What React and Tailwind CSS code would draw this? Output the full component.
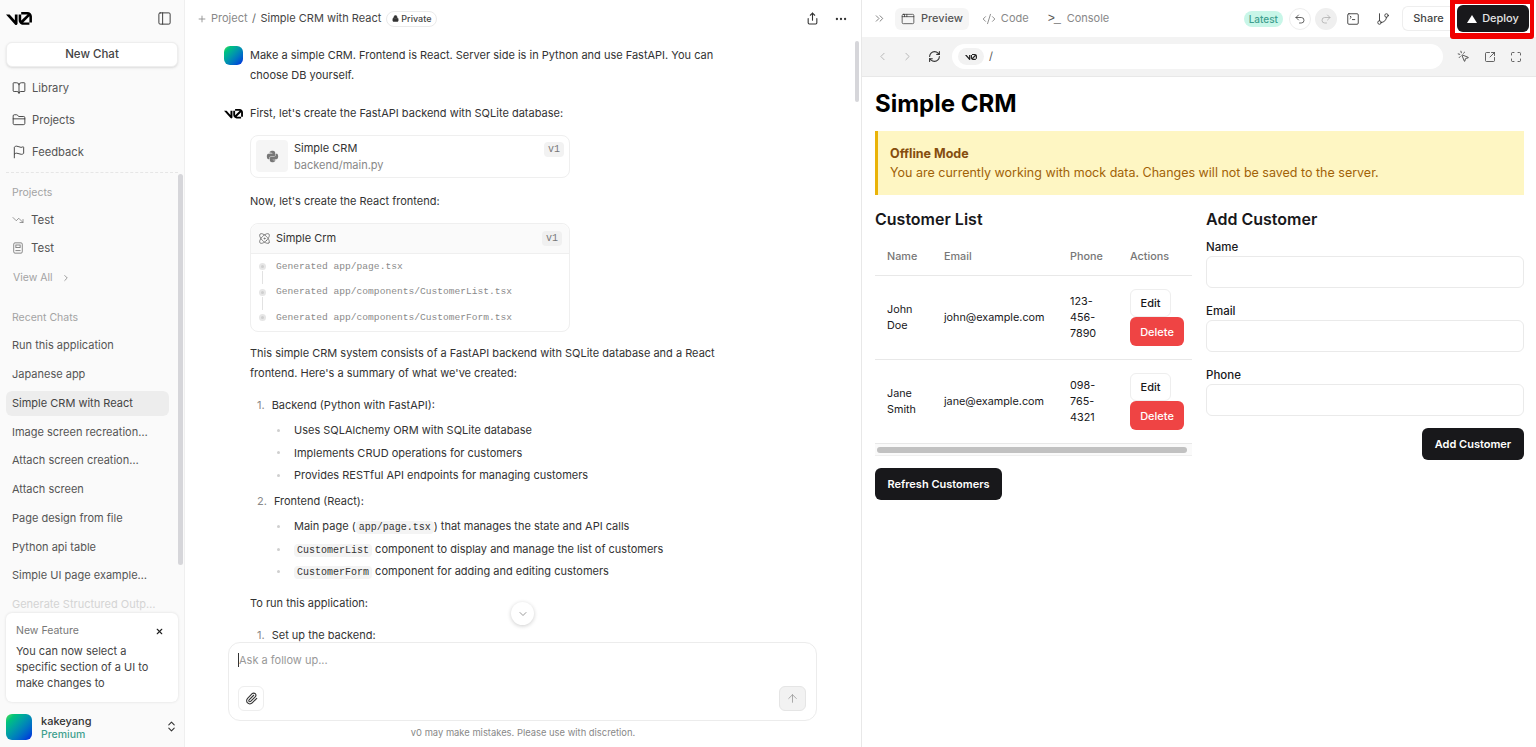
import {
  AppWindow,
  ArrowUp,
  Atom,
  BookOpen,
  ChevronDown,
  ChevronLeft,
  ChevronRight,
  ChevronsRight,
  ChevronsUpDown,
  CodeXml,
  Ellipsis,
  Flag,
  FolderClosed,
  GitBranch,
  Lock,
  Maximize,
  MousePointerClick,
  PanelLeft,
  Paperclip,
  Plus,
  RefreshCw,
  Redo2,
  Share,
  SquareArrowOutUpRight,
  SquareTerminal,
  TrendingDown,
  Undo2,
  X,
} from "lucide-react";
import { FaPython } from "react-icons/fa";

const recentChats = [
  "Run this application",
  "Japanese app",
  "Simple CRM with React",
  "Image screen recreation…",
  "Attach screen creation…",
  "Attach screen",
  "Page design from file",
  "Python api table",
  "Simple UI page example…",
];

const customers = [
  { first: "John", last: "Doe", email: "john@example.com", phone: ["123-", "456-", "7890"] },
  { first: "Jane", last: "Smith", email: "jane@example.com", phone: ["098-", "765-", "4321"] },
];

function V0Logo({ className }) {
  return (
    <svg viewBox="0 0 40 20" fill="currentColor" className={className}>
      <path d="M23.3919 0H32.9188C36.7819 0 39.9136 3.13165 39.9136 6.99475V16.0805H36.0006V6.99475C36.0006 6.90167 35.9969 6.80925 35.9898 6.71766L26.4628 16.079C26.4949 16.08 26.5272 16.0805 26.5595 16.0805H36.0006V19.7762H26.5595C22.6964 19.7762 19.4788 16.6139 19.4788 12.7508V3.68923H23.3919V12.7508C23.3919 12.9253 23.4054 13.0977 23.4316 13.2668L33.1682 3.6995C33.0861 3.6927 33.003 3.68923 32.9188 3.68923H23.3919V0Z" />
      <path d="M13.7688 19.0956L0 3.68759H5.53933L13.6231 12.7337V3.68759H17.7535V17.5746C17.7535 19.6705 15.1654 20.6584 13.7688 19.0956Z" />
    </svg>
  );
}

function NoteIcon({ className }) {
  return (
    <svg viewBox="0 0 12 14" fill="none" stroke="currentColor" strokeWidth="1" className={className}>
      <rect x="1" y="1" width="10" height="12" rx="1.5" />
      <rect x="3.5" y="3.5" width="5" height="3" />
      <path d="M3 10h6" />
    </svg>
  );
}

function Avatar({ className }) {
  return <div className={`bg-gradient-to-br from-[#3fdc4a] to-[#1200e0] ${className}`} />;
}

function Sidebar() {
  return (
    <aside className="relative flex h-full w-[185px] shrink-0 flex-col overflow-hidden border-r border-[#efefef] bg-[#fafafa]">
      <div className="flex h-[42px] shrink-0 items-center justify-between pb-[5px] pl-[6px] pr-[12px]">
        <V0Logo className="w-[26px] text-black" />
        <PanelLeft className="h-[15px] w-[15px] text-[#333]" strokeWidth={1.5} />
      </div>
      <div className="mx-[6px] flex h-[25px] shrink-0 items-center justify-center rounded-md border border-[#eeeeee] bg-white pt-[1px] text-[11.5px] font-medium text-[#444] shadow-sm">
        New Chat
      </div>
      <nav className="mt-[5px] flex shrink-0 flex-col text-[11.2px] text-[#555]">
        <div className="flex h-[32px] items-center gap-[6px] pl-[12px]">
          <BookOpen className="h-[14px] w-[14px] text-[#333]" strokeWidth={1.5} />
          Library
        </div>
        <div className="flex h-[32px] items-center gap-[6px] pl-[12px]">
          <FolderClosed className="h-[14px] w-[14px] text-[#333]" strokeWidth={1.5} />
          Projects
        </div>
        <div className="flex h-[32px] items-center gap-[6px] pl-[12px]">
          <Flag className="h-[14px] w-[14px] text-[#333]" strokeWidth={1.5} />
          Feedback
        </div>
      </nav>
      <div className="mx-[6px] mt-[4px] shrink-0 border-t border-dashed border-[#e6e6e6]" />
      <div className="mt-[13px] shrink-0 pl-[12px] text-[10.5px] leading-[14px] text-[#a3a3a3]">Projects</div>
      <div className="mt-[12px] flex shrink-0 items-center gap-[7px] pl-[12px] text-[11.5px] leading-[16px] text-[#555]">
        <TrendingDown className="h-[12px] w-[12px] text-[#777]" strokeWidth={1.5} />
        Test
      </div>
      <div className="mt-[12px] flex shrink-0 items-center gap-[7px] pl-[12px] text-[11.5px] leading-[16px] text-[#555]">
        <NoteIcon className="h-[12px] w-[12px] text-[#777]" />
        Test
      </div>
      <div className="mt-[14px] flex shrink-0 items-center gap-[8px] pl-[13px] text-[10.5px] leading-[16px] text-[#a3a3a3]">
        View All
        <ChevronRight className="h-[10px] w-[10px] text-[#888]" />
      </div>
      <div className="mt-[25px] shrink-0 pl-[12px] text-[10.5px] leading-[14px] text-[#a3a3a3]">Recent Chats</div>
      <div className="mt-[8px] flex shrink-0 flex-col gap-[3.75px] pl-[6px] pr-[15px] text-[11px] text-[#555]">
        {recentChats.map((chat) => (
          <div
            key={chat}
            className={`flex h-[25px] items-center rounded-md px-[6px] ${chat === "Simple CRM with React" ? "bg-[#ededed] text-[#444]" : ""}`}
          >
            {chat}
          </div>
        ))}
        <div className="flex h-[25px] items-center whitespace-nowrap px-[6px] text-[#d4d4d4]">Generate Structured Outp…</div>
      </div>
      <div className="absolute bottom-[45px] left-[6px] flex h-[89px] w-[172px] flex-col rounded-md bg-white px-[10px] pt-[10px] shadow-[0_0_3px_rgba(0,0,0,0.12)]">
        <div className="flex items-center justify-between pr-[4px] text-[10.5px] leading-[16px] text-[#777]">
          New Feature
          <X className="h-[9px] w-[9px] text-[#222]" strokeWidth={3} />
        </div>
        <p className="mt-[4px] text-[11px] leading-[16px] text-[#444]">
          You can now select a specific section of a UI to make changes to
        </p>
      </div>
      <div className="absolute bottom-[5px] left-[6px] flex w-[172px] items-center">
        <Avatar className="h-[26px] w-[26px] rounded-md" />
        <div className="ml-[9px] flex-1 pt-[3px]">
          <div className="text-[11px] font-medium leading-[14px] text-[#333]">kakeyang</div>
          <div className="text-[10.5px] font-medium leading-[14px] text-[#3f9f8f]">Premium</div>
        </div>
        <ChevronsUpDown className="h-[13px] w-[13px] text-[#333]" />
      </div>
      <div className="absolute left-[178px] top-[174px] h-[391px] w-[5px] rounded-full bg-[#d6d6da]" />
    </aside>
  );
}

function Code({ children }) {
  return (
    <code className="rounded bg-[#f4f4f4] px-[3px] py-[1px] font-['Liberation_Mono',monospace] text-[10px] leading-[12px] text-[#333]">
      {children}
    </code>
  );
}

function Bullet({ children }) {
  return (
    <div className="flex h-[22.5px] items-center pl-[53px] text-[11px] text-[#333]">
      <span className="mr-[14px] h-[3px] w-[3px] rounded-full bg-[#cfcfcf]" />
      <span className="leading-[14px]">{children}</span>
    </div>
  );
}

function GeneratedRow({ text, line }) {
  return (
    <div className="relative flex h-[25.5px] items-center pl-[25px] font-['Liberation_Mono',monospace] text-[9.6px] text-[#8a8a8a]">
      <span className="absolute left-[8px] h-[7px] w-[7px] rounded-full border-2 border-[#e6e6e6] bg-[#cfcfcf]" />
      {line && <span className="absolute left-[11px] top-[17px] h-[13px] w-px bg-[#e2e2e2]" />}
      {text}
    </div>
  );
}

function Chat() {
  return (
    <main className="relative flex h-full w-[676px] shrink-0 flex-col overflow-hidden bg-white">
      <header className="flex h-[37px] shrink-0 items-center pl-[12px] pr-[13px] text-[11px]">
        <Plus className="h-[10px] w-[10px] text-[#888]" />
        <span className="ml-[4px] text-[#888]">Project</span>
        <span className="mx-[4.5px] text-[#666]">/</span>
        <span className="text-[#444]">Simple CRM with React</span>
        <span className="ml-[5px] flex h-[16px] items-center gap-[2px] rounded-full border border-[#eaeaea] px-[5px] text-[9px] font-medium text-[#444]">
          <Lock className="h-[7px] w-[7px] fill-[#333] text-[#333]" />
          Private
        </span>
        <div className="flex-1" />
        <Share className="h-[13px] w-[13px] text-[#333]" />
        <Ellipsis className="ml-[15px] h-[14px] w-[14px] text-[#333]" />
      </header>

      <div className="flex-1 overflow-hidden pl-[39px] text-[11px] text-[#333]">
        <div className="mt-[9px] flex">
          <Avatar className="mr-[7px] h-[19px] w-[19px] shrink-0 rounded-md" />
          <p className="w-[470px] leading-[19.5px]">
            Make a simple CRM. Frontend is React. Server side is in Python and use FastAPI. You can choose DB yourself.
          </p>
        </div>
        <div className="mt-[19px] flex items-center">
          <V0Logo className="mr-[7px] w-[19px] shrink-0 text-black" />
          <p className="leading-[19.5px]">First, let's create the FastAPI backend with SQLite database:</p>
        </div>
        <div className="ml-[26px] mt-[11px] flex h-[43px] w-[320px] items-center rounded-lg border border-[#efefef] pl-[5px] pr-[5px]">
          <div className="flex h-[32px] w-[32px] items-center justify-center rounded bg-[#f5f5f5]">
            <FaPython className="h-[13px] w-[13px] text-[#777]" />
          </div>
          <div className="ml-[6px] flex-1 pt-[2px] leading-[17px]">
            <div className="text-[#333]">Simple CRM</div>
            <div className="text-[#888]">backend/main.py</div>
          </div>
          <span className="mb-[14px] rounded bg-[#f2f2f2] px-[4px] font-['Liberation_Mono',monospace] text-[10px] leading-[15px] text-[#777]">v1</span>
        </div>
        <p className="ml-[26px] mt-[14px] leading-[19.5px]">Now, let's create the React frontend:</p>
        <div className="ml-[26px] mt-[12px] w-[320px] rounded-lg border border-[#efefef]">
          <div className="flex h-[30px] items-center rounded-t-lg border-b border-[#efefef] bg-[#fafafa] pl-[7px] pr-[7px]">
            <Atom className="h-[13px] w-[13px] text-[#666]" strokeWidth={1.5} />
            <span className="ml-[5px] flex-1 text-[#333]">Simple Crm</span>
            <span className="rounded bg-[#f0f0f0] px-[4px] font-['Liberation_Mono',monospace] text-[10px] leading-[15px] text-[#777]">v1</span>
          </div>
          <div>
            <GeneratedRow text="Generated app/page.tsx" line />
            <GeneratedRow text="Generated app/components/CustomerList.tsx" line />
            <GeneratedRow text="Generated app/components/CustomerForm.tsx" />
          </div>
        </div>
        <p className="ml-[26px] mt-[11px] w-[480px] leading-[20px]">
          This simple CRM system consists of a FastAPI backend with SQLite database and a React frontend. Here's a summary of what we've created:
        </p>
        <div className="ml-[33px] mt-[11px] flex flex-col leading-[22.5px]">
          <div><span className="mr-[7px] text-[#888]">1.</span>Backend (Python with FastAPI):</div>
        </div>
        <div className="mt-[3px] flex flex-col">
          <Bullet>Uses SQLAlchemy ORM with SQLite database</Bullet>
          <Bullet>Implements CRUD operations for customers</Bullet>
          <Bullet>Provides RESTful API endpoints for managing customers</Bullet>
        </div>
        <div className="ml-[33px] mt-[3px] leading-[22.5px]">
          <span className="mr-[7px] text-[#888]">2.</span>Frontend (React):
        </div>
        <div className="mt-[3.5px] flex flex-col">
          <Bullet>Main page (<Code>app/page.tsx</Code>) that manages the state and API calls</Bullet>
          <Bullet><Code>CustomerList</Code> component to display and manage the list of customers</Bullet>
          <Bullet><Code>CustomerForm</Code> component for adding and editing customers</Bullet>
        </div>
        <p className="ml-[26px] mt-[11px] leading-[19.5px]">To run this application:</p>
        <div className="ml-[33px] mt-[12.5px] leading-[19.5px]">
          <span className="mr-[7px] text-[#888]">1.</span>Set up the backend:
        </div>
      </div>

      <div className="absolute bottom-[26px] left-[43px] flex h-[79px] w-[589px] flex-col justify-between rounded-xl border border-[#ececec] bg-white pb-[9px] pl-[9px] pr-[10px] pt-[9px]">
        <div className="flex items-center text-[11px] leading-[16px] text-[#999]">
          <span className="h-[14px] w-px bg-[#333]" />
          Ask a follow up...
        </div>
        <div className="flex items-end justify-between">
          <div className="flex h-[25px] w-[26px] items-center justify-center rounded-md border border-[#eeeeee]">
            <Paperclip className="h-[13px] w-[13px] text-[#333]" />
          </div>
          <div className="flex h-[25px] w-[27px] items-center justify-center rounded-md border border-[#e5e5e5] bg-[#f2f2f2]">
            <ArrowUp className="h-[13px] w-[13px] text-[#999]" strokeWidth={1.5} />
          </div>
        </div>
      </div>
      <div className="absolute bottom-[7px] left-0 w-full text-center text-[9.4px] leading-[14px] text-[#888]">
        v0 may make mistakes. Please use with discretion.
      </div>
      <div className="absolute left-[326px] top-[602px] flex h-[23px] w-[23px] items-center justify-center rounded-full bg-white shadow-[0_1px_4px_rgba(0,0,0,0.2)]">
        <ChevronDown className="h-[12px] w-[12px] text-[#777]" strokeWidth={1.5} />
      </div>
      <div className="absolute left-[670px] top-[41px] h-[61px] w-[4px] rounded-full bg-[#d6d6da]" />
    </main>
  );
}

function Toolbar() {
  return (
    <div className="relative flex h-[37px] shrink-0 items-center pl-[11px] text-[11px]">
      <ChevronsRight className="h-[13px] w-[13px] text-[#666]" strokeWidth={1.5} />
      <div className="ml-[9px] flex h-[22px] items-center gap-[6px] rounded-md bg-[#f5f5f5] px-[6px] font-medium text-[#555]">
        <AppWindow className="h-[14px] w-[14px] text-[#333]" strokeWidth={1.25} />
        Preview
      </div>
      <div className="ml-[13px] flex items-center gap-[5px] text-[#888]">
        <CodeXml className="h-[14px] w-[14px] text-[#666]" strokeWidth={1.25} />
        Code
      </div>
      <div className="ml-[19px] flex items-center gap-[6px] text-[#888]">
        <span className="w-[13px] font-['Liberation_Mono',monospace] text-[12px] leading-none tracking-[-1px] text-[#555]">&gt;_</span>
        Console
      </div>
      <div className="flex-1" />
      <span className="rounded-full bg-[#c8f6e8] px-[5px] text-[10px] font-medium leading-[16px] text-[#3f9f8f]">Latest</span>
      <div className="ml-[6px] flex h-[22px] w-[22px] items-center justify-center rounded-full border border-[#eeeeee]">
        <Undo2 className="h-[12px] w-[12px] text-[#333]" strokeWidth={1.5} />
      </div>
      <div className="ml-[4px] flex h-[22px] w-[22px] items-center justify-center rounded-full bg-[#efefef]">
        <Redo2 className="h-[12px] w-[12px] text-[#aaa]" strokeWidth={1.5} />
      </div>
      <SquareTerminal className="ml-[9px] h-[14px] w-[14px] text-[#333]" strokeWidth={1.5} />
      <GitBranch className="ml-[16px] h-[14px] w-[14px] text-[#333]" strokeWidth={1.5} />
      <div className="ml-[12px] flex h-[25px] w-[48px] items-center justify-center rounded-l-md border border-r-0 border-[#eeeeee] pl-[4px] font-medium text-[#444]">
        Share
      </div>
      <div className="relative ml-[7px] mr-[7px] flex h-[27px] w-[72px] items-center justify-center gap-[5px] rounded-md bg-[#18181b] font-medium text-[#e5e5e5]">
        <span className="h-0 w-0 border-x-[5px] border-b-[8px] border-x-transparent border-b-white" />
        Deploy
        <div className="absolute -bottom-[7px] -left-[7px] -right-[5px] -top-[5px] rounded-b-[3px] border-b-[6px] border-l-[5px] border-r-[4px] border-t-[4px] border-[#f00000]" />
      </div>
    </div>
  );
}

function BrowserBar() {
  return (
    <div className="flex h-[40px] shrink-0 items-center border-b border-[#e8e8e8] bg-[#f3f3f3] pl-[14px] pr-[14px]">
      <ChevronLeft className="h-[13px] w-[13px] text-[#aaa]" strokeWidth={1.5} />
      <ChevronRight className="ml-[12px] h-[13px] w-[13px] text-[#aaa]" strokeWidth={1.5} />
      <RefreshCw className="ml-[14px] h-[13px] w-[13px] text-[#333]" strokeWidth={2} />
      <div className="ml-[11px] flex h-[25px] flex-1 items-center rounded-full bg-white pl-[6px] text-[11px] text-[#555]">
        <span className="flex h-[17px] w-[26px] items-center justify-center rounded-full bg-[#f2f2f2]">
          <V0Logo className="w-[12px] text-[#222]" />
        </span>
        <span className="ml-[5px]">/</span>
      </div>
      <MousePointerClick className="ml-[14px] h-[13px] w-[13px] text-[#333]" strokeWidth={1.5} />
      <SquareArrowOutUpRight className="ml-[14px] h-[12px] w-[12px] text-[#333]" strokeWidth={1.5} />
      <Maximize className="ml-[14px] h-[12px] w-[12px] text-[#333]" strokeWidth={1.5} />
    </div>
  );
}

function Field({ label }) {
  return (
    <div className="mb-[12px]">
      <div className="pt-[2px] text-[11.5px] font-medium leading-[18px] text-[#18181b]">{label}</div>
      <div className="h-[32px] rounded-md border border-[#eaeaea] bg-white" />
    </div>
  );
}

function CustomerTable() {
  return (
    <div className="mt-[11px] border-b border-[#efefef]">
      <div className="flex h-[34px] items-center border-b border-[#e8e8e8] pb-[2px] text-[10.8px] font-medium text-[#777]">
        <span className="w-[69px] pl-[12px]">Name</span>
        <span className="w-[126px]">Email</span>
        <span className="w-[60px]">Phone</span>
        <span>Actions</span>
      </div>
      {customers.map((c) => (
        <div key={c.email} className="flex h-[84px] items-center border-b border-[#e8e8e8] text-[10.8px] leading-[16px] text-[#18181b]">
          <div className="w-[69px] pl-[12px]">
            <div>{c.first}</div>
            <div>{c.last}</div>
          </div>
          <div className="w-[126px]">{c.email}</div>
          <div className="w-[60px]">
            {c.phone.map((p) => (
              <div key={p}>{p}</div>
            ))}
          </div>
          <div className="flex flex-col items-start">
            <button className="flex h-[28px] w-[41px] items-center justify-center rounded-md border border-[#eeeeee] bg-white text-[11px] font-medium">
              Edit
            </button>
            <button className="flex h-[29px] w-[54px] items-center justify-center rounded-md bg-[#ef4444] text-[11px] font-medium text-white">
              Delete
            </button>
          </div>
        </div>
      ))}
      <div className="flex h-[11px] items-center bg-[#fafafa] pl-[2px] pr-[5px]">
        <div className="h-[6px] w-full rounded-full bg-[#c1c1c1]" />
      </div>
    </div>
  );
}

function Preview() {
  return (
    <section className="flex h-full flex-1 flex-col overflow-hidden border-l border-[#e8e8e8] bg-white">
      <Toolbar />
      <BrowserBar />
      <div className="flex-1 pl-[13px] pr-[12px] pt-[11px]">
        <h1 className="text-[24px] font-bold leading-[32px] text-black">Simple CRM</h1>
        <div className="mt-[11px] h-[64px] border-l-[3px] border-[#eab308] bg-[#fef6c3] pl-[12px] pt-[13px] text-[12.5px] leading-[19px] text-[#a16207]">
          <div className="font-bold text-[#854d0e]">Offline Mode</div>
          <div>You are currently working with mock data. Changes will not be saved to the server.</div>
        </div>
        <div className="mt-[12px] flex gap-[14px]">
          <div className="w-[317px]">
            <h2 className="text-[16px] font-semibold leading-[24px] text-[#18181b]">Customer List</h2>
            <CustomerTable />
            <button className="mt-[12px] flex h-[32px] w-[127px] items-center justify-center rounded-md bg-[#18181b] text-[11px] font-semibold text-white">
              Refresh Customers
            </button>
          </div>
          <div className="flex-1">
            <h2 className="text-[16px] font-semibold leading-[24px] text-[#18181b]">Add Customer</h2>
            <div className="mt-[5px]">
              <Field label="Name" />
              <Field label="Email" />
              <Field label="Phone" />
            </div>
            <div className="mt-[1px] flex justify-end">
              <button className="flex h-[32px] w-[102px] items-center justify-center rounded-md bg-[#18181b] text-[11px] font-semibold text-white">
                Add Customer
              </button>
            </div>
          </div>
        </div>
      </div>
    </section>
  );
}

export default function App() {
  return (
    <div className="flex h-screen w-full overflow-hidden bg-white font-['Inter',sans-serif]">
      <Sidebar />
      <Chat />
      <Preview />
    </div>
  );
}
